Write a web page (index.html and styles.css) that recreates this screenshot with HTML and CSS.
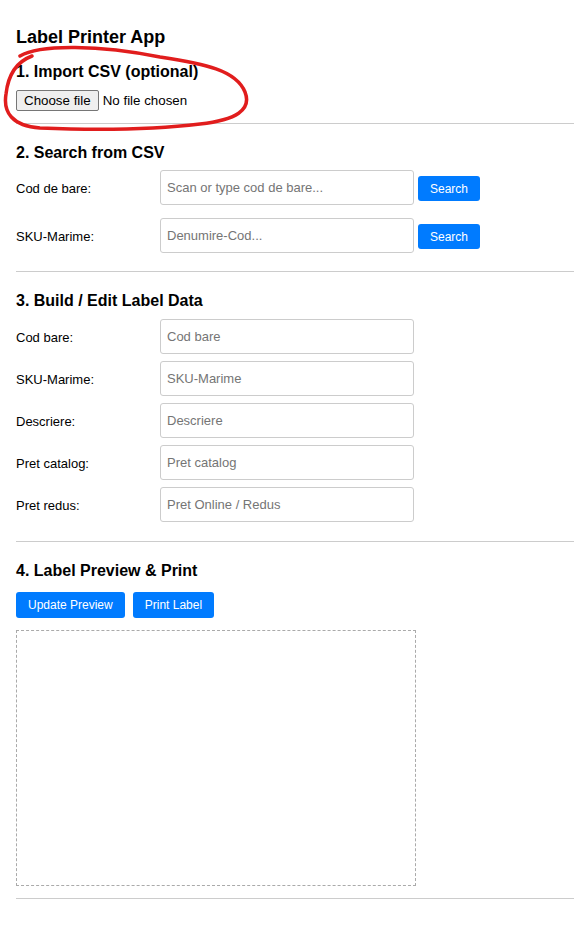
FILE: index.html
```html
<!DOCTYPE html>
<html lang="en">
<head>
<meta charset="utf-8">
<title>Label Printer App</title>
<link rel="stylesheet" href="styles.css">
</head>
<body>
<div class="app">
  <h1 class="title">Label Printer App</h1>

  <section class="section section-import">
    <h2 class="section-title">1. Import CSV (optional)</h2>
    <div class="file-row">
      <label class="file-btn"><input type="file" class="file-input" accept=".csv">Choose file</label>
      <span class="file-name">No file chosen</span>
    </div>
  </section>

  <section class="section section-search">
    <h2 class="section-title">2. Search from CSV</h2>
    <div class="fields fields-search">
      <div class="field-row">
        <label class="field-label" for="s-barcode">Cod de bare:</label>
        <input class="text-input" id="s-barcode" type="text" placeholder="Scan or type cod de bare...">
        <button class="btn btn-search" type="button">Search</button>
      </div>
      <div class="field-row">
        <label class="field-label" for="s-sku">SKU-Marime:</label>
        <input class="text-input" id="s-sku" type="text" placeholder="Denumire-Cod...">
        <button class="btn btn-search" type="button">Search</button>
      </div>
    </div>
  </section>

  <section class="section section-build">
    <h2 class="section-title">3. Build / Edit Label Data</h2>
    <div class="fields fields-build">
      <div class="field-row">
        <label class="field-label" for="f-barcode">Cod bare:</label>
        <input class="text-input" id="f-barcode" type="text" placeholder="Cod bare">
      </div>
      <div class="field-row">
        <label class="field-label" for="f-sku">SKU-Marime:</label>
        <input class="text-input" id="f-sku" type="text" placeholder="SKU-Marime">
      </div>
      <div class="field-row">
        <label class="field-label" for="f-desc">Descriere:</label>
        <input class="text-input" id="f-desc" type="text" placeholder="Descriere">
      </div>
      <div class="field-row">
        <label class="field-label" for="f-price">Pret catalog:</label>
        <input class="text-input" id="f-price" type="text" placeholder="Pret catalog">
      </div>
      <div class="field-row">
        <label class="field-label" for="f-sale">Pret redus:</label>
        <input class="text-input" id="f-sale" type="text" placeholder="Pret Online / Redus">
      </div>
    </div>
  </section>

  <section class="section section-preview">
    <h2 class="section-title">4. Label Preview &amp; Print</h2>
    <div class="actions">
      <button class="btn btn-lg" type="button">Update Preview</button>
      <button class="btn btn-lg" type="button">Print Label</button>
    </div>
    <div class="preview"></div>
  </section>

  <svg class="annotation" width="574" height="140" viewBox="0 0 574 140" aria-hidden="true">
    <path d="M 20 56 C 40 44, 100 45, 160 57 C 205 64, 236 70, 245 92 C 252 110, 236 120, 200 124 C 150 130, 90 130, 40 128 C 12 126, 3 112, 6 94 C 8 76, 16 62, 32 56" fill="none" stroke="#e11d1d" stroke-width="3.5" stroke-linecap="round" stroke-linejoin="round"/>
  </svg>
</div>
</body>
</html>
```

FILE: styles.css
```css
* {
  box-sizing: border-box;
}

body {
  margin: 0;
  background: #fff;
  color: #000;
  font-family: "Liberation Sans", Arial, sans-serif;
}

.app {
  position: relative;
  padding: 26px 0 0 16px;
}

.title {
  margin: 0;
  font-size: 18px;
  line-height: 22px;
  font-weight: bold;
}

.section {
  border-bottom: 1px solid #ccc;
}

.section-title {
  margin: 0 0 8px;
  font-size: 16px;
  line-height: 18px;
  font-weight: bold;
}

.section-import {
  padding: 15px 0 12px;
}

.section-import .section-title {
  margin-bottom: 9px;
}

.section-search {
  padding: 20px 0 18px;
}

.section-build {
  padding: 20px 0 19px;
}

.section-build .section-title {
  margin-bottom: 9px;
}

.section-preview {
  padding: 20px 0 12px;
}

.section-preview .section-title {
  margin-bottom: 12px;
}

/* file input */
.file-row {
  display: flex;
  align-items: center;
  gap: 4px;
  height: 21px;
  font-size: 13.333px;
}

.file-input {
  display: none;
}

.file-btn {
  display: inline-flex;
  align-items: center;
  height: 21px;
  padding: 0 7px;
  background: #efefef;
  border: 1px solid #767676;
  border-radius: 2px;
  color: #000;
  font-size: 13.333px;
  cursor: default;
}

.file-name {
  color: #000;
}

/* fields */
.fields {
  display: flex;
  flex-direction: column;
}

.fields-search {
  gap: 13px;
}

.fields-build {
  gap: 7px;
}

.field-row {
  display: flex;
  align-items: center;
}

.field-label {
  width: 144px;
  flex: none;
  padding-top: 2px;
  font-size: 13px;
  color: #000;
}

.text-input {
  width: 254px;
  height: 35px;
  padding: 0 6px;
  border: 1px solid #ccc;
  border-radius: 3px;
  font-family: "Liberation Sans", Arial, sans-serif;
  font-size: 13px;
  color: #000;
  background: #fff;
  outline: none;
}

.text-input::placeholder {
  color: #757575;
}

.btn {
  height: 25px;
  margin-left: 4px;
  padding: 0 12px;
  border: none;
  border-radius: 3px;
  background: #007bff;
  color: #fff;
  font-family: "Liberation Sans", Arial, sans-serif;
  font-size: 12px;
  cursor: pointer;
}

.btn-search {
  margin-top: 2px;
}

.actions {
  display: flex;
  gap: 8px;
}

.btn-lg {
  height: 26px;
  margin-left: 0;
}

.preview {
  width: 400px;
  height: 256px;
  margin-top: 12px;
  border: 1px dashed #aaa;
}

.annotation {
  position: absolute;
  top: 0;
  left: 0;
  pointer-events: none;
}
```
